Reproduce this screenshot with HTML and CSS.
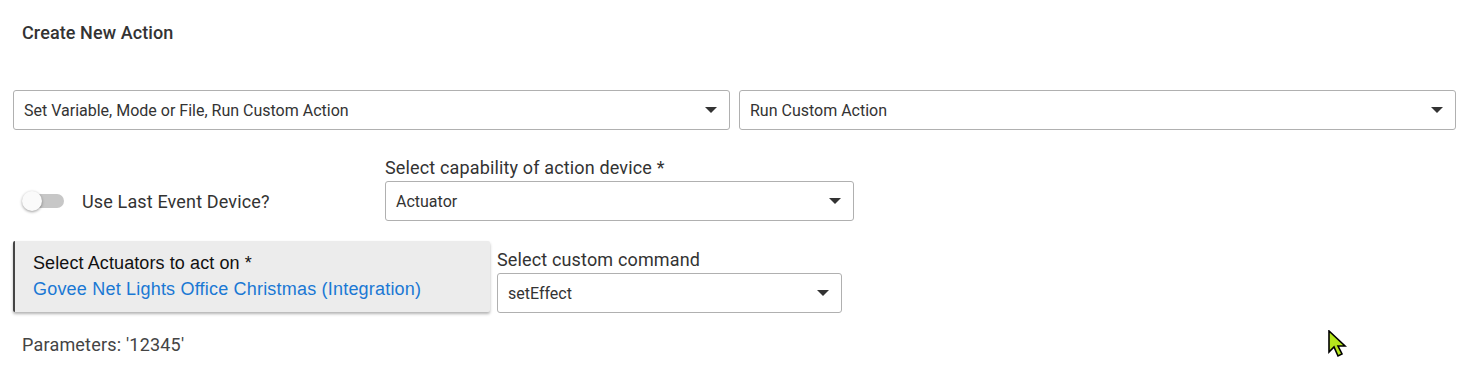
FILE: index.html
```html
<!DOCTYPE html>
<html lang="en">
<head>
    <meta charset="UTF-8">
    <title>Create New Action</title>
    <link rel="stylesheet" href="styles.css">
</head>
<body>
    <h3 class="title">Create New Action</h3>

    <div class="row row-top">
        <div class="select wide">
            <span>Set Variable, Mode or File, Run Custom Action</span>
            <span class="arrow"></span>
        </div>
        <div class="select wide">
            <span>Run Custom Action</span>
            <span class="arrow"></span>
        </div>
    </div>

    <div class="row row-device">
        <div class="toggle-wrap">
            <span class="toggle"><span class="thumb"></span></span>
            <span class="toggle-label">Use Last Event Device?</span>
        </div>
        <div class="field cap-field">
            <label>Select capability of action device *</label>
            <div class="select">
                <span>Actuator</span>
                <span class="arrow"></span>
            </div>
        </div>
    </div>

    <div class="row row-cmd">
        <div class="device-card">
            <div class="card-title">Select Actuators to act on *</div>
            <a class="card-link" href="#">Govee Net Lights Office Christmas (Integration)</a>
        </div>
        <div class="field cmd-field">
            <label>Select custom command</label>
            <div class="select">
                <span>setEffect</span>
                <span class="arrow"></span>
            </div>
        </div>
    </div>

    <div class="params">Parameters: '12345'</div>

    <svg class="cursor" width="22" height="30" viewBox="0 0 22 30">
        <path d="M1 1 L1 22 L6 17 L10 26 L14 24 L10 16 L17 16 Z" fill="#b5e61d" stroke="#000" stroke-width="1.6" stroke-linejoin="miter"/>
    </svg>
</body>
</html>
```

FILE: styles.css
```css
body {
    font-family: Roboto, "Liberation Sans", sans-serif;
    margin: 0;
    padding: 0 20px 0 13px;
    background: white;
    color: #333;
    position: relative;
    height: 384px;
    box-sizing: border-box;
}
.title {
    margin: 0;
    padding: 22px 0 0 9px;
    font-size: 18px;
    font-weight: 500;
    letter-spacing: 0.1px;
    color: #333;
    height: 90px;
    box-sizing: border-box;
}
.row {
    display: flex;
    gap: 10px;
}
.row-top { gap: 9px; }
.select {
    display: flex;
    align-items: center;
    justify-content: space-between;
    height: 40px;
    box-sizing: border-box;
    border: 1px solid #b0b0b0;
    border-radius: 3px;
    padding: 0 12px 0 10px;
    font-size: 16px;
    color: #333;
}
.select.wide { flex: 1; }
.arrow {
    width: 0;
    height: 0;
    border-left: 6px solid transparent;
    border-right: 6px solid transparent;
    border-top: 6px solid #333;
}
.row-top { margin-bottom: 27px; }
.row-device {
    align-items: flex-end;
    gap: 0;
}
.toggle-wrap {
    display: flex;
    align-items: center;
    width: 372px;
    height: 40px;
    padding-left: 9px;
    box-sizing: border-box;
}
.toggle {
    position: relative;
    width: 40px;
    height: 14px;
    border-radius: 7px;
    background: #c7c7c7;
    margin: 0 18px 0 2px;
}
.thumb {
    position: absolute;
    left: -2px;
    top: -3px;
    width: 20px;
    height: 20px;
    border-radius: 50%;
    background: #fafafa;
    box-shadow: 0 1px 3px rgba(0,0,0,0.4);
}
.toggle-label {
    font-size: 18px;
    letter-spacing: 0.15px;
    color: #333;
}
.field label {
    display: block;
    font-size: 18px;
    letter-spacing: 0.15px;
    line-height: 21px;
    color: #333;
    margin-bottom: 3px;
}
.cap-field { width: 469px; }
.row-cmd {
    margin-top: 20px;
    gap: 7px;
    align-items: flex-start;
}
.device-card {
    width: 477px;
    height: 71px;
    box-sizing: border-box;
    background: #ececec;
    border-left: 2px solid #444;
    border-radius: 2px;
    box-shadow: 0 2px 3px rgba(0,0,0,0.3);
    padding: 12px 18px;
    font-family: "Liberation Sans", Arial, sans-serif;
}
.card-title {
    font-size: 18px;
    letter-spacing: 0.1px;
    color: #111;
    line-height: 20px;
}
.card-link {
    display: block;
    font-size: 18px;
    letter-spacing: 0.2px;
    color: #1a78d4;
    text-decoration: none;
    line-height: 20px;
    margin-top: 6px;
}
.cmd-field { width: 345px; margin-top: 8px; }
.params {
    padding: 21px 0 0 9px;
    font-size: 18px;
    letter-spacing: 0.2px;
    color: #444;
}
.cursor {
    position: absolute;
    left: 1328px;
    top: 330px;
}
```
